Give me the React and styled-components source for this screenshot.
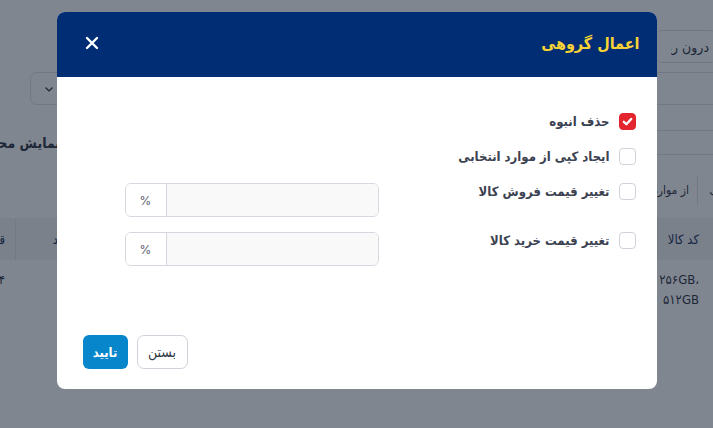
import React from "react";
import styled, { createGlobalStyle } from "styled-components";

const GlobalStyle = createGlobalStyle`
  html, body {
    margin: 0;
    padding: 0;
    width: 713px;
    height: 428px;
    overflow: hidden;
    background: #ffffff;
    font-family: Inter, "DejaVu Sans", sans-serif;
  }
  * { box-sizing: border-box; }
`;

const faFont = `"DejaVu Sans Condensed", "DejaVu Sans", sans-serif`;

function CheckIcon() {
  return (
    <svg width="11" height="11" viewBox="0 0 12 12">
      <path
        d="M2 6.4 L4.8 9 L10 3.2"
        fill="none"
        stroke="#fff"
        strokeWidth="2.6"
        strokeLinecap="round"
        strokeLinejoin="round"
      />
    </svg>
  );
}

function CloseIcon() {
  return (
    <svg width="14" height="14" viewBox="0 0 14 14">
      <path d="M2 2 L12 12 M12 2 L2 12" stroke="#fff" strokeWidth="2.4" strokeLinecap="round" />
    </svg>
  );
}

function Chevron() {
  return (
    <svg width="12" height="12" viewBox="0 0 12 12">
      <path d="M2.5 4.5 L6 8 L9.5 4.5" fill="none" stroke="#3a4150" strokeWidth="1.2" />
    </svg>
  );
}

const options = [
  { label: "حذف انبوه", checked: true, input: false },
  { label: "ایجاد کپی از موارد انتخابی", checked: false, input: false },
  { label: "تغییر قیمت فروش کالا", checked: false, input: true },
  { label: "تغییر قیمت خرید کالا", checked: false, input: true },
];

function App() {
  return (
    <>
      <GlobalStyle />
      <Page>
        <Toolbar>
          <SearchBox>
            <Clip>درون ریشه</Clip>
          </SearchBox>
        </Toolbar>
        <SelectBox>
          <span />
          <Chevron />
        </SelectBox>
        <TitleRow>
          <FilterBox />
          <PageTitle>نمایش محصولات</PageTitle>
        </TitleRow>
        <Tabs>
          <Tab w={52}>انتخابی</Tab>
          <Tab w={80}>از موارد</Tab>
        </Tabs>
        <Table>
          <HeadRow>
            <Cell w={56}>کد کالا</Cell>
            <Cell wide>نام کالا</Cell>
            <Cell w={74}>واحد</Cell>
            <Cell w={60} last>
              قیمت
            </Cell>
          </HeadRow>
          <BodyRow>
            <Cell w={56}>
              <LtrText>۲۵۶GB،</LtrText>
              <LtrText>۵۱۲GB</LtrText>
            </Cell>
            <Cell wide />
            <Cell w={74} />
            <Cell w={60} last>
              ۴
            </Cell>
          </BodyRow>
        </Table>
      </Page>

      <Overlay>
        <Modal>
          <ModalHeader>
            <ModalTitle>اعمال گروهی</ModalTitle>
            <CloseButton>
              <CloseIcon />
            </CloseButton>
          </ModalHeader>
          <ModalBody>
            {options.map((o) => (
              <OptionRow key={o.label}>
                <Option>
                  <Box checked={o.checked}>{o.checked && <CheckIcon />}</Box>
                  <OptionLabel>{o.label}</OptionLabel>
                </Option>
                {o.input && (
                  <InputGroup>
                    <Addon>%</Addon>
                    <Field />
                  </InputGroup>
                )}
              </OptionRow>
            ))}
          </ModalBody>
          <ModalFooter>
            <PrimaryButton>تایید</PrimaryButton>
            <GhostButton>بستن</GhostButton>
          </ModalFooter>
        </Modal>
      </Overlay>
    </>
  );
}

/* background page */
const Page = styled.div`
  direction: rtl;
  width: 713px;
  height: 428px;
  overflow: hidden;
  padding: 30px 0 0 30px;
  color: #3a4150;
  font-family: ${faFont};
  font-size: 13px;
`;
const Toolbar = styled.div`
  display: flex;
  height: 33px;
`;
const SearchBox = styled.div`
  width: 62px;
  margin-right: -4px;
  border: 1px solid #dfe2e8;
  border-radius: 7px;
  display: flex;
  align-items: center;
  padding-right: 7px;
`;
const Clip = styled.span`
  display: block;
  width: 38px;
  overflow: hidden;
  white-space: nowrap;
  font-size: 14px;
`;
const SelectBox = styled.div`
  margin-top: 9px;
  margin-right: -20px;
  height: 33px;
  border: 1px solid #dfe2e8;
  border-radius: 7px;
  display: flex;
  align-items: center;
  justify-content: space-between;
  padding: 0 12px;
`;
const TitleRow = styled.div`
  display: flex;
  align-items: center;
  justify-content: space-between;
  height: 25px;
  margin-top: 25px;
  margin-left: -30px;
`;
const FilterBox = styled.div`
  width: 60px;
  height: 25px;
  border-top: 1px solid #dfe2e8;
  border-bottom: 1px solid #dfe2e8;
`;
const PageTitle = styled.div`
  font-weight: bold;
  font-size: 14px;
  margin-left: -44px;
`;
const Tabs = styled.div`
  display: flex;
  height: 30px;
  margin-top: 20px;
`;
const Tab = styled.div`
  flex: 0 0 ${(p) => p.w}px;
  border-left: 1px solid #dfe2e8;
  padding: 0 8px;
  display: flex;
  align-items: center;
  white-space: nowrap;
  overflow: hidden;
  font-size: 12px;
  &:first-child {
    margin-right: -36px;
  }
`;
const Table = styled.div`
  margin-top: 13px;
  margin-left: -75px;
`;
const HeadRow = styled.div`
  display: flex;
  height: 42px;
  background: #f3f4f6;
  color: #2b3d66;
`;
const BodyRow = styled.div`
  display: flex;
  height: 56px;
  padding-top: 10px;
  line-height: 20px;
`;
const Cell = styled.div`
  flex: ${(p) => (p.wide ? "1" : `0 0 ${p.w}px`)};
  padding: 0 ${(p) => (p.last ? "10px" : "14px")} 0 8px;
  display: flex;
  align-items: center;
  border-left: ${(p) => (p.last ? "none" : "1px solid #e4e6eb")};
  font-size: 13px;
  ${BodyRow} & {
    display: block;
    border-left-color: transparent;
  }
`;
const LtrText = styled.span`
  display: block;
  direction: ltr;
  text-align: right;
  white-space: nowrap;
`;

/* modal */
const Overlay = styled.div`
  position: fixed;
  inset: 0;
  background: rgba(1, 13, 31, 0.5);
  display: flex;
  justify-content: center;
  align-items: flex-start;
  padding-top: 12px;
`;
const Modal = styled.div`
  width: 600px;
  background: #fff;
  border-radius: 8px;
  overflow: hidden;
  direction: rtl;
  font-family: ${faFont};
`;
const ModalHeader = styled.div`
  height: 65px;
  background: #002d74;
  display: flex;
  align-items: center;
  justify-content: space-between;
  padding: 0 17px 0 28px;
`;
const ModalTitle = styled.h3`
  margin: 0 0 2px 0;
  color: #f7d336;
  font-size: 16px;
  font-weight: bold;
`;
const CloseButton = styled.button`
  background: none;
  border: none;
  padding: 0;
  display: flex;
  margin-bottom: 3px;
`;
const ModalBody = styled.div`
  padding: 36px 21px 0 68px;
  display: flex;
  flex-direction: column;
  gap: 15px;
`;
const OptionRow = styled.div`
  display: flex;
  align-items: flex-start;
  justify-content: space-between;
  min-height: 20px;
`;
const Option = styled.label`
  display: flex;
  align-items: center;
  gap: 9px;
`;
const Box = styled.span`
  width: 17px;
  height: 17px;
  border-radius: 4px;
  border: 1px solid ${(p) => (p.checked ? "#e3262d" : "#cfd2d9")};
  background: ${(p) => (p.checked ? "#e3262d" : "#fff")};
  display: flex;
  align-items: center;
  justify-content: center;
`;
const OptionLabel = styled.span`
  font-size: 13px;
  font-weight: bold;
  color: #3b4251;
`;
const InputGroup = styled.div`
  direction: ltr;
  width: 254px;
  height: 34px;
  border: 1px solid #d5d8de;
  border-radius: 6px;
  display: flex;
  overflow: hidden;
`;
const Addon = styled.div`
  width: 41px;
  border-right: 1px solid #d5d8de;
  background: #fff;
  display: flex;
  align-items: center;
  justify-content: center;
  font-family: Inter, "DejaVu Sans", sans-serif;
  font-size: 12px;
  color: #5a606b;
`;
const Field = styled.input`
  flex: 1;
  border: none;
  background: #f9f9fa;
  outline: none;
`;
const ModalFooter = styled.div`
  direction: ltr;
  display: flex;
  gap: 9px;
  padding: 69px 26px 20px;
`;
const PrimaryButton = styled.button`
  height: 34px;
  width: 45px;
  border: none;
  border-radius: 6px;
  background: #0886cc;
  color: #fff;
  font-family: ${faFont};
  font-size: 13px;
  font-weight: bold;
  padding: 0;
`;
const GhostButton = styled.button`
  height: 34px;
  width: 51px;
  border: 1px solid #cfd2d9;
  border-radius: 7px;
  background: #fff;
  color: #333a45;
  font-family: ${faFont};
  font-size: 14px;
  padding: 0;
`;

export default App;
